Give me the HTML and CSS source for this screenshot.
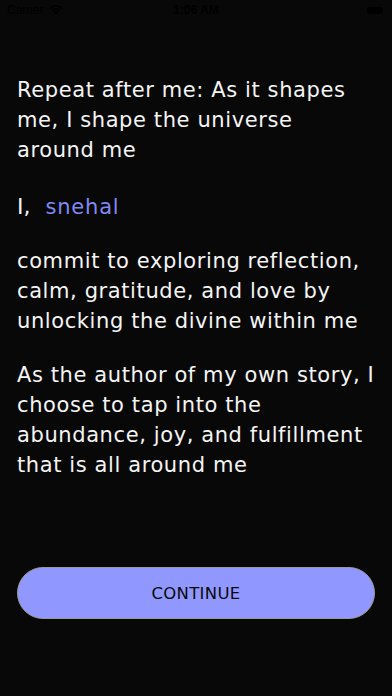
FILE: index.html
```html
<!DOCTYPE html>
<html>
<head>
<meta charset="utf-8">
<link rel="stylesheet" href="styles.css">
</head>
<body>
<div class="screen">
  <div class="status">
    <div class="status-left">
      <span class="carrier">Carrier</span>
      <svg class="wifi" width="14" height="10" viewBox="0 0 14 10"><path d="M7 9.5 L9.2 7.1 A3.2 3.2 0 0 0 4.8 7.1 Z" fill="#000"/><path d="M2.6 4.9 A6.2 6.2 0 0 1 11.4 4.9 L10.2 6.2 A4.5 4.5 0 0 0 3.8 6.2 Z" fill="#000"/><path d="M0.4 2.7 A9.3 9.3 0 0 1 13.6 2.7 L12.4 4 A7.6 7.6 0 0 0 1.6 4 Z" fill="#000"/></svg>
    </div>
    <span class="time">1:06 AM</span>
    <div class="battery"><div class="battery-fill"></div></div>
  </div>
  <main class="content">
    <p class="para">Repeat after me: As it shapes me, I shape the universe<br>around me</p>
    <p class="name-line"><span class="pronoun">I,</span><span class="name">snehal</span></p>
    <p class="para">commit to exploring reflection, calm, gratitude, and love by unlocking the divine within me</p>
    <p class="para">As the author of my own story, I choose to tap into the abundance, joy, and fulfillment that is all around me</p>
  </main>
  <button class="continue">CONTINUE</button>
</div>
</body>
</html>
```
FILE: styles.css
```css
html, body {
  margin: 0;
  padding: 0;
  background: #080808;
}
.screen {
  width: 392px;
  height: 696px;
  display: flex;
  flex-direction: column;
  background: #080808;
  font-family: "DejaVu Sans", sans-serif;
  box-sizing: border-box;
}
.status {
  height: 20px;
  display: flex;
  align-items: center;
  justify-content: space-between;
  padding: 0 9px 0 7px;
  color: #000;
  font-family: "Liberation Sans", sans-serif;
  font-size: 12px;
  position: relative;
}
.status-left {
  display: flex;
  align-items: center;
  gap: 5px;
}
.wifi { display: block; }
.time {
  position: absolute;
  left: 0;
  right: 0;
  text-align: center;
  font-weight: bold;
  pointer-events: none;
}
.battery {
  width: 16px;
  height: 7px;
  border-radius: 2px;
  background: #000;
}
.content {
  padding: 55px 10px 0 17px;
  display: flex;
  flex-direction: column;
  gap: 24px;
}
.content p {
  margin: 0;
}
.para {
  color: #f4f4f4;
  font-size: 21px;
  letter-spacing: 0.6px;
  line-height: 30px;
}
.name-line {
  display: flex;
  align-items: baseline;
  gap: 15px;
  margin-top: 3px !important;
  line-height: 30px;
}
.pronoun {
  color: #f4f4f4;
  font-size: 22px;
}
.name {
  color: #8088f4;
  font-size: 21px;
  letter-spacing: 0.8px;
}
.continue {
  margin: auto 17px 77px 17px;
  height: 52px;
  border-radius: 26px;
  border: 1px solid #9a9a9a;
  background: #9098ff;
  color: #0a0a0a;
  font-family: "DejaVu Sans", sans-serif;
  font-size: 16.5px;
  letter-spacing: 0.3px;
  padding: 0;
}
```
